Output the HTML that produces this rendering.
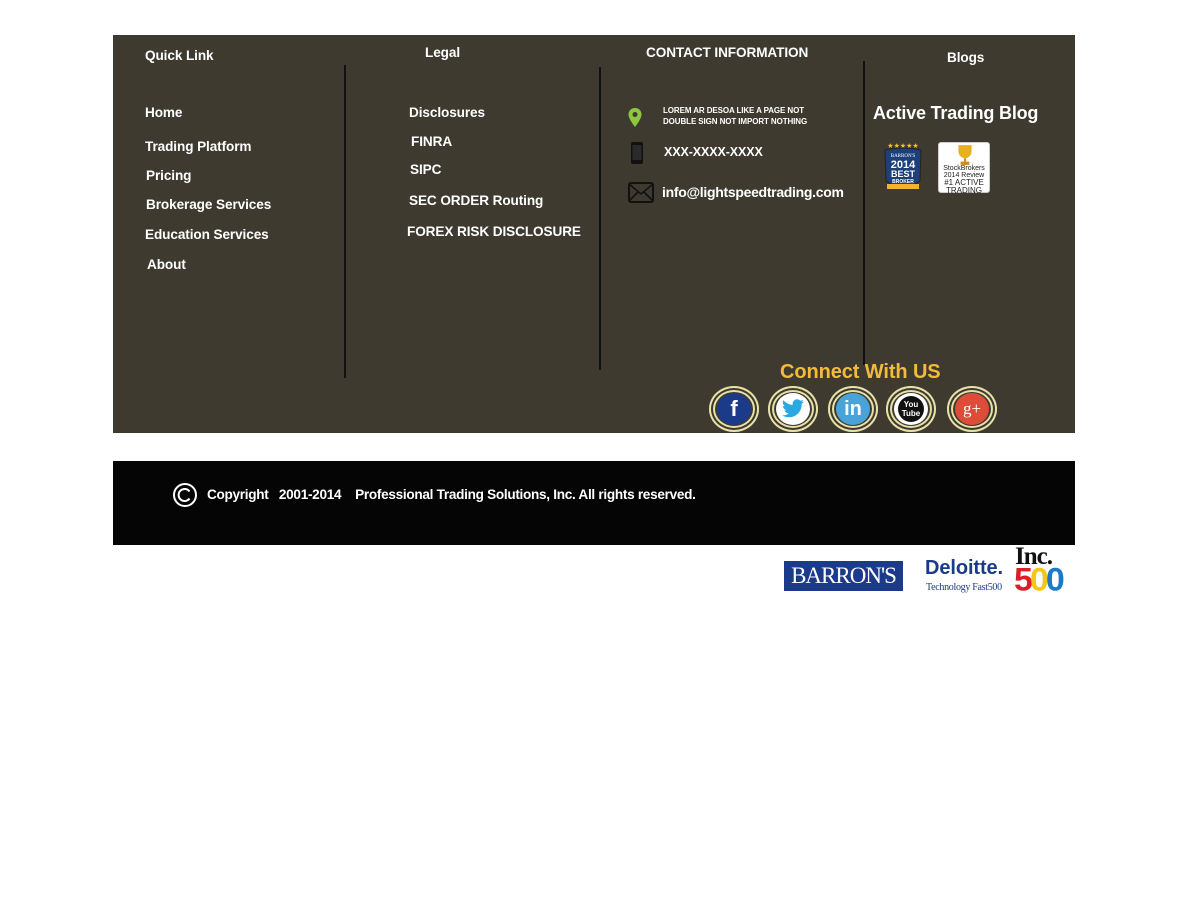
<!DOCTYPE html>
<html><head><meta charset="utf-8"><style>
*{margin:0;padding:0;box-sizing:border-box}
body{width:1200px;height:900px;background:#fff;position:relative;font-family:"Liberation Sans",Arial,sans-serif;overflow:hidden}
.p{position:absolute;left:113px;top:35px;width:962px;height:398px;background:#3e3a30}
.t{position:absolute;color:#fff;font-weight:bold;white-space:nowrap;font-size:13.6px;letter-spacing:-0.1px}
.v{position:absolute;width:2px;background:#111}
.soc{position:absolute;top:386px;width:50px;height:46px;border-radius:50%;background:#3e3a30;box-shadow:0 0 0 2px #e8e2a8 inset,0 0 0 4px #3e3a30 inset,0 0 0 6px #e8e2a8 inset}
.soc i{position:absolute;left:8px;top:7px;width:34px;height:32px;border-radius:50%;display:flex;align-items:center;justify-content:center;font-style:normal;font-weight:bold;color:#fff}
.bar{position:absolute;left:113px;top:461px;width:962px;height:84px;background:#050505}
</style></head><body>
<div class="p"></div>
<div class="v" style="left:344px;top:65px;height:313px"></div>
<div class="v" style="left:599px;top:67px;height:303px"></div>
<div class="v" style="left:863px;top:61px;height:304px"></div>

<div class="t" style="left:145px;top:48px">Quick Link</div>
<div class="t" style="left:145px;top:105px">Home</div>
<div class="t" style="left:145px;top:139px">Trading Platform</div>
<div class="t" style="left:146px;top:168px">Pricing</div>
<div class="t" style="left:146px;top:197px">Brokerage Services</div>
<div class="t" style="left:145px;top:227px">Education Services</div>
<div class="t" style="left:147px;top:257px">About</div>

<div class="t" style="left:425px;top:45px">Legal</div>
<div class="t" style="left:409px;top:105px">Disclosures</div>
<div class="t" style="left:411px;top:134px">FINRA</div>
<div class="t" style="left:410px;top:162px">SIPC</div>
<div class="t" style="left:409px;top:193px">SEC ORDER Routing</div>
<div class="t" style="left:407px;top:224px">FOREX RISK DISCLOSURE</div>

<div class="t" style="left:646px;top:45px">CONTACT INFORMATION</div>
<svg style="position:absolute;left:627px;top:107px" width="16" height="22" viewBox="0 0 16 22"><path d="M8 1C4 1 1.5 4 1.5 7.5 1.5 12 8 20 8 20S14.5 12 14.5 7.5C14.5 4 12 1 8 1Z" fill="#8dc63f"/><circle cx="8" cy="7.5" r="2.5" fill="#3e3a30"/></svg>
<div class="t" style="left:663px;top:105px;font-size:8px;line-height:11px">LOREM AR DESOA LIKE A PAGE NOT<br>DOUBLE SIGN NOT IMPORT NOTHING</div>
<svg style="position:absolute;left:630px;top:141px" width="14" height="24" viewBox="0 0 14 24"><rect x="1" y="1" width="12" height="22" rx="2" fill="#111"/><rect x="2.5" y="4" width="9" height="15" fill="#2a2a2a"/></svg>
<div class="t" style="left:664px;top:145px;font-size:12.5px">XXX-XXXX-XXXX</div>
<svg style="position:absolute;left:628px;top:182px" width="26" height="21" viewBox="0 0 26 21"><rect x="1" y="1" width="24" height="19" rx="2" fill="none" stroke="#111" stroke-width="2"/><path d="M1 2L13 12 25 2M1 19L10 10M25 19L16 10" fill="none" stroke="#111" stroke-width="1.6"/></svg>
<div class="t" style="left:662px;top:184px;font-size:14px;letter-spacing:-0.3px">info@lightspeedtrading.com</div>

<div class="t" style="left:947px;top:50px">Blogs</div>
<div class="t" style="left:873px;top:103px;font-size:18px;letter-spacing:-0.2px">Active Trading Blog</div>
<svg style="position:absolute;left:882px;top:141px" width="42" height="52" viewBox="0 0 42 52"><text x="21" y="7" fill="#f5c518" font-size="7" text-anchor="middle">★★★★★</text><path d="M3 9Q21 5 39 9L38 40Q21 52 4 40Z" fill="#1d3f7a" stroke="#222"/><text x="21" y="16" fill="#fff" font-size="5" text-anchor="middle" font-family="Liberation Serif">BARRON'S</text><text x="21" y="27" fill="#fff" font-size="11" font-weight="bold" text-anchor="middle">2014</text><text x="21" y="36" fill="#fff" font-size="9" font-weight="bold" text-anchor="middle">BEST</text><text x="21" y="42" fill="#fff" font-size="5" font-weight="bold" text-anchor="middle">BROKER</text><rect x="5" y="43" width="32" height="5" fill="#f0b428"/></svg>
<div style="position:absolute;left:938px;top:142px;width:52px;height:51px;background:#fff;border-radius:3px;border:1px solid #ccc;font-size:7px;line-height:7px;text-align:center;color:#222;font-family:'Liberation Sans',sans-serif;padding-top:22px">StockBrokers<br>2014 Review<br><b style="font-weight:normal;font-size:8px">#1 ACTIVE<br>TRADING</b>
<svg style="position:absolute;left:15px;top:1px" width="22" height="22" viewBox="0 0 18 20"><path d="M3 1H15V6Q15 12 9 13Q3 12 3 6Z" fill="#e8b020"/><rect x="8" y="13" width="2" height="3" fill="#c8901a"/><rect x="5" y="16" width="8" height="3" fill="#c8901a"/></svg></div>

<div class="t" style="left:780px;top:361px;font-size:20px;color:#f2bb3a">Connect With US</div>
<div class="soc" style="left:709px"><i style="background:#1b3a8a;font-size:22px">f</i></div>
<div class="soc" style="left:768px"><i style="background:#fff"><svg width="24" height="20" viewBox="0 0 24 20"><path d="M23 2.5c-.8.4-1.7.6-2.6.7a4.5 4.5 0 0 0 2-2.5c-.9.5-1.9.9-2.9 1.1A4.5 4.5 0 0 0 11.8 6 12.8 12.8 0 0 1 2.5 1.3a4.5 4.5 0 0 0 1.4 6 4.4 4.4 0 0 1-2-.6 4.5 4.5 0 0 0 3.6 4.5 4.5 4.5 0 0 1-2 .1 4.5 4.5 0 0 0 4.2 3.1A9 9 0 0 1 1 16.3 12.7 12.7 0 0 0 7.9 18.3c8.3 0 12.8-6.9 12.8-12.8v-.6c.9-.6 1.7-1.4 2.3-2.4z" fill="#29a9e1"/></svg></i></div>
<div class="soc" style="left:828px"><i style="background:#4aa3d8;font-size:20px">in</i></div>
<div class="soc" style="left:886px"><i style="background:#fff"><span style="display:block;width:26px;height:26px;border-radius:50%;background:#111;font-size:8px;line-height:9px;text-align:center;padding-top:4px">You<br>Tube</span></i></div>
<div class="soc" style="left:947px"><i style="background:#dd4b39;font-family:'Liberation Serif',serif;font-size:17px;font-weight:normal">g+</i></div>

<div class="bar"></div>
<svg style="position:absolute;left:172px;top:482px" width="26" height="26" viewBox="0 0 26 26"><circle cx="13" cy="13" r="11" fill="none" stroke="#fff" stroke-width="2"/><path d="M17.5 9.5A6 6 0 1 0 17.5 16.5" fill="none" stroke="#fff" stroke-width="2"/></svg>
<div class="t" style="left:207px;top:487px;letter-spacing:-0.3px">Copyright &nbsp; 2001-2014 &nbsp;&nbsp; Professional Trading Solutions, Inc. All rights reserved.</div>

<div style="position:absolute;left:784px;top:561px;width:119px;height:30px;background:#1b3a8a;color:#fff;font-family:'Liberation Serif',serif;font-size:23px;text-align:center;line-height:30px;letter-spacing:-1px">BARRON'S</div>
<div class="t" style="left:925px;top:557px;font-size:20px;color:#1b3a8a">Deloitte.</div>
<div style="position:absolute;left:926px;top:582px;font-family:'Liberation Serif',serif;font-size:10px;color:#1b3a8a;letter-spacing:-0.3px">Technology Fast500</div>
<div style="position:absolute;left:1015px;top:543px;font-family:'Liberation Serif',serif;font-weight:bold;font-size:25px;color:#111;letter-spacing:-1px">Inc.</div>
<div style="position:absolute;left:1014px;top:561px;font-weight:bold;font-size:34px;letter-spacing:-3px;font-family:'Liberation Sans',sans-serif;transform:scaleY(0.95)"><span style="color:#d9202a">5</span><span style="color:#f5c518">0</span><span style="color:#1b7ac8">0</span></div>
</body></html>
